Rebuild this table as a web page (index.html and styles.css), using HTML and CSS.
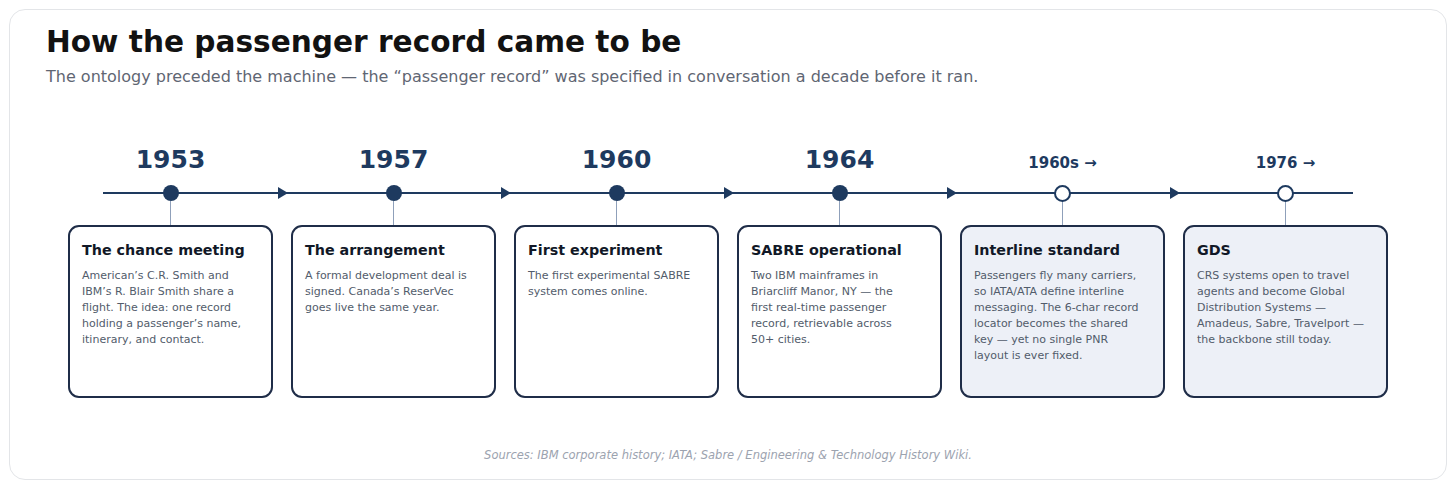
FILE: index.html
```html
<!DOCTYPE html>
<html lang="en">
<head>
<meta charset="utf-8">
<title>How the passenger record came to be</title>
<link rel="stylesheet" href="styles.css">
</head>
<body>
<div class="frame">
  <h1 class="title">How the passenger record came to be</h1>
  <p class="subtitle">The ontology preceded the machine — the “passenger record” was specified in conversation a decade before it ran.</p>

  <div class="timeline">
    <div class="stop">
      <div class="year-row"><span class="year">1953</span></div>
      <div class="dot"></div>
      <div class="stem"></div>
      <div class="card">
        <h2 class="card-title">The chance meeting</h2>
        <p class="card-body">American’s C.R. Smith and<br>IBM’s R. Blair Smith share a<br>flight. The idea: one record<br>holding a passenger’s name,<br>itinerary, and contact.</p>
      </div>
    </div>
    <div class="stop">
      <div class="year-row"><span class="year">1957</span></div>
      <div class="dot"></div>
      <div class="stem"></div>
      <div class="card">
        <h2 class="card-title">The arrangement</h2>
        <p class="card-body">A formal development deal is<br>signed. Canada’s ReserVec<br>goes live the same year.</p>
      </div>
    </div>
    <div class="stop">
      <div class="year-row"><span class="year">1960</span></div>
      <div class="dot"></div>
      <div class="stem"></div>
      <div class="card">
        <h2 class="card-title">First experiment</h2>
        <p class="card-body">The first experimental SABRE<br>system comes online.</p>
      </div>
    </div>
    <div class="stop">
      <div class="year-row"><span class="year">1964</span></div>
      <div class="dot"></div>
      <div class="stem"></div>
      <div class="card">
        <h2 class="card-title">SABRE operational</h2>
        <p class="card-body">Two IBM mainframes in<br>Briarcliff Manor, NY — the<br>first real-time passenger<br>record, retrievable across<br>50+ cities.</p>
      </div>
    </div>
    <div class="stop">
      <div class="year-row"><span class="year year-small">1960s →</span></div>
      <div class="dot dot-open"></div>
      <div class="stem"></div>
      <div class="card card-tint">
        <h2 class="card-title">Interline standard</h2>
        <p class="card-body">Passengers fly many carriers,<br>so IATA/ATA define interline<br>messaging. The 6-char record<br>locator becomes the shared<br>key — yet no single PNR<br>layout is ever fixed.</p>
      </div>
    </div>
    <div class="stop stop-last">
      <div class="year-row"><span class="year year-small">1976 →</span></div>
      <div class="dot dot-open"></div>
      <div class="stem"></div>
      <div class="card card-tint">
        <h2 class="card-title">GDS</h2>
        <p class="card-body">CRS systems open to travel<br>agents and become Global<br>Distribution Systems —<br>Amadeus, Sabre, Travelport —<br>the backbone still today.</p>
      </div>
    </div>
  </div>

  <p class="sources">Sources: IBM corporate history; IATA; Sabre / Engineering &amp; Technology History Wiki.</p>
</div>
</body>
</html>
```

FILE: styles.css
```css
* { box-sizing: border-box; }

html, body {
  margin: 0;
  background: #ffffff;
}

body {
  padding: 9px;
  font-family: "DejaVu Sans", "Liberation Sans", sans-serif;
}

.frame {
  height: 471px;
  border: 1px solid #e3e5e8;
  border-radius: 16px;
  padding: 15px 36px 0 36px;
}

.title {
  margin: 0;
  font-size: 29.6px;
  line-height: 34px;
  font-weight: 700;
  color: #121212;
}

.subtitle {
  margin: 7px 0 0 0;
  font-size: 16px;
  line-height: 22px;
  color: #5f6673;
}

.timeline {
  position: relative;
  display: grid;
  grid-template-columns: repeat(6, 205px);
  column-gap: 18px;
  width: fit-content;
  margin: 52px 0 0 22px;
}

.timeline::before {
  content: "";
  position: absolute;
  left: 35px;
  right: 35px;
  top: 52px;
  height: 2px;
  background: #1e3a5f;
}

.stop {
  position: relative;
  display: flex;
  flex-direction: column;
  align-items: center;
}

.stop::after {
  content: "";
  position: absolute;
  left: 210px;
  top: 47px;
  width: 0;
  height: 0;
  border-left: 10px solid #1e3a5f;
  border-top: 6px solid transparent;
  border-bottom: 6px solid transparent;
}

.stop-last::after { display: none; }

.year-row {
  height: 35px;
  display: flex;
  align-items: flex-end;
  justify-content: center;
}

.year {
  font-size: 25px;
  line-height: 30px;
  font-weight: 700;
  color: #1e3a5f;
}

.year-small {
  font-size: 15px;
  line-height: 18px;
  padding-bottom: 3px;
}

.dot {
  position: relative;
  z-index: 1;
  width: 16px;
  height: 16px;
  margin-top: 10px;
  border-radius: 50%;
  background: #1e3a5f;
}

.dot-open {
  background: #ffffff;
  border: 2.5px solid #1e3a5f;
  width: 17px;
  height: 17px;
  margin-top: 9.5px;
  margin-bottom: -0.5px;
}

.stem {
  width: 1px;
  height: 24px;
  background: #8fa0ba;
}

.card {
  align-self: stretch;
  height: 173px;
  border: 2px solid #1f2d48;
  border-radius: 11px;
  background: #ffffff;
  padding: 13px 10px 0 12px;
}

.card-tint {
  background: #edf0f7;
}

.card-title {
  margin: 0;
  font-size: 14.3px;
  line-height: 20px;
  font-weight: 700;
  color: #111827;
}

.card-body {
  margin: 8px 0 0 0;
  font-size: 11px;
  line-height: 16px;
  white-space: nowrap;
  color: #525c6b;
}

.sources {
  margin: 49px 0 0 0;
  text-align: center;
  font-size: 11.5px;
  line-height: 16px;
  font-style: italic;
  color: #9ca3af;
}
```
